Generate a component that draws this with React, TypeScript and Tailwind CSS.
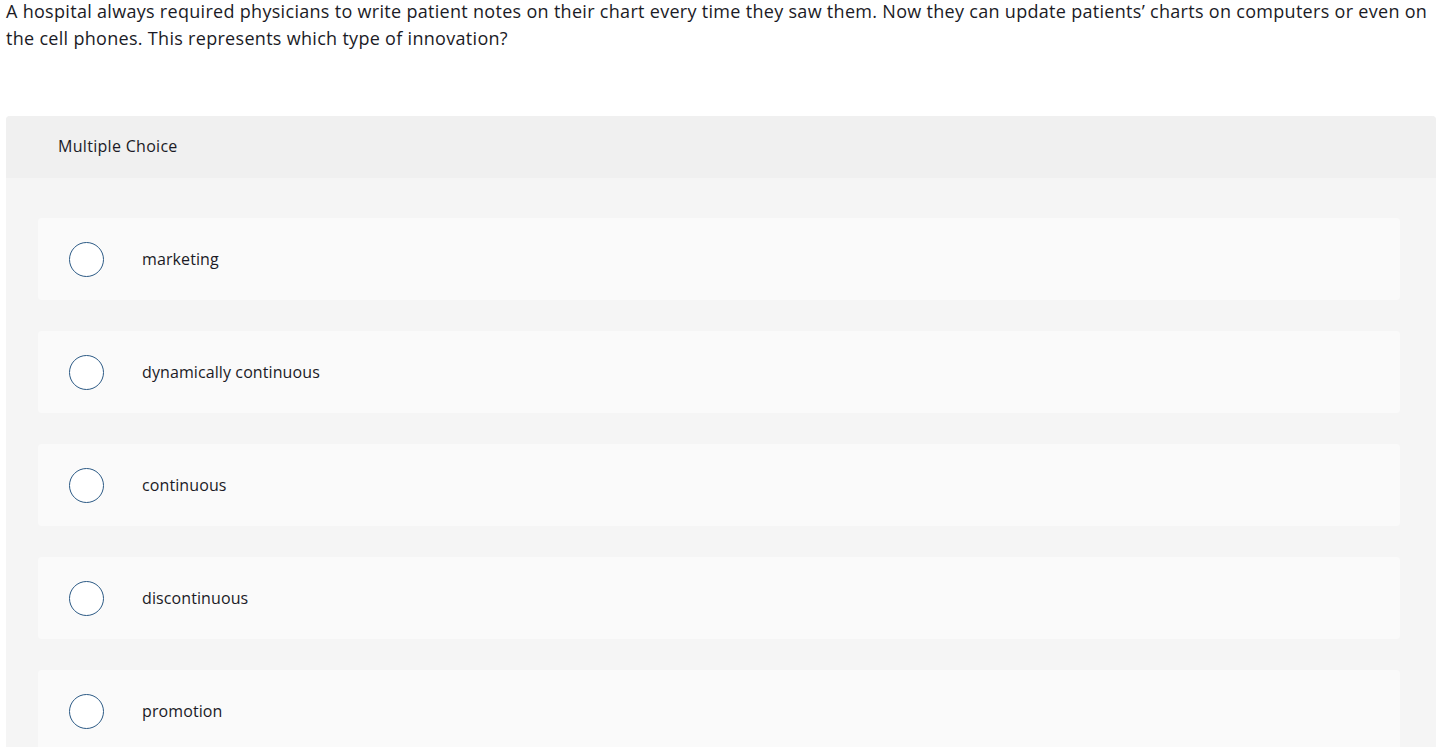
import React from "react";

const options = ["marketing", "dynamically continuous", "continuous", "discontinuous", "promotion"];

export default function App() {
  return (
    <div className="bg-white min-h-screen text-[#1b1b26]" style={{ fontFamily: "'Open Sans', sans-serif" }}>
      <div className="pl-[6px] w-[1439px]">
        <p className="text-[18px] leading-[27px] tracking-[0.3px] m-0 -mt-[2px]">
          A hospital always required physicians to write patient notes on their chart every time they saw them. Now they can update patients’ charts on computers or even on the cell phones. This represents which type of innovation?
        </p>
        <div className="mt-[64px] w-[1430px] rounded-t-[4px] overflow-hidden bg-[#f5f5f5]">
          <div className="h-[62px] bg-[#f0f0f0] flex items-center pl-[52px] pb-[2px] text-[16px] tracking-[0.3px]">Multiple Choice</div>
          <div className="pt-[40px] pl-[32px] pr-[36px] flex flex-col gap-[31px]">
            {options.map((o) => (
              <div key={o} className="h-[82px] bg-[#fafafa] rounded-[4px] flex items-center">
                <div className="ml-[31px] w-[35px] h-[35px] rounded-full border-[1.5px] border-[#2c5a85] bg-white shrink-0" />
                <span className="ml-[38px] text-[16px] tracking-[0.1px]">{o}</span>
              </div>
            ))}
          </div>
        </div>
      </div>
    </div>
  );
}
